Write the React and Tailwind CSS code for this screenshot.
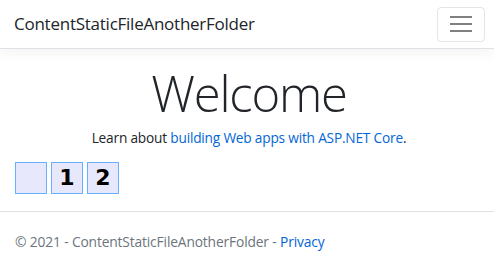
import React from 'react';

const Box = ({ label }) => (
  <div className="w-[32px] h-[32px] border border-[#66b0ff] bg-[#e8e8fc] flex items-center justify-center text-[22px] font-black text-black font-['DejaVu_Sans',sans-serif] leading-none">
    {label}
  </div>
);

export default function App() {
  return (
    <div className="min-h-[267px] bg-white text-[#212529] font-['Open_Sans',sans-serif] text-[14px]">
      <header className="h-[49px] border-b border-[#dee2e6] shadow-[0_4px_12px_rgba(0,0,0,0.05)] flex items-center justify-between pl-[14px] pr-[9px]">
        <span className="text-[17px] tracking-[-0.25px]">ContentStaticFileAnotherFolder</span>
        <button className="w-[48px] h-[35px] border border-[rgba(0,0,0,0.1)] rounded-[4px] flex flex-col items-center justify-center gap-[5px]">
          <span className="block w-[22px] h-[2px] bg-[#808080]" />
          <span className="block w-[22px] h-[2px] bg-[#808080]" />
          <span className="block w-[22px] h-[2px] bg-[#808080]" />
        </button>
      </header>

      <main className="px-[15px] pt-[15px]">
        <div className="text-center">
          <h1 className="text-[49px] font-light leading-[1.2] tracking-[-1.2px] pl-[4px]">Welcome</h1>
          <p className="mt-[5px] text-[13.7px] tracking-[-0.2px] pl-[4px]">
            Learn about <a className="text-[#0366d6]">building Web apps with ASP.NET Core</a>.
          </p>
        </div>
        <div className="flex gap-[4px] mt-[14px] mb-[17px]">
          <Box label="" />
          <Box label="1" />
          <Box label="2" />
        </div>
      </main>

      <footer className="border-t border-[#dee2e6] h-[60px] leading-[60px] px-[15px] text-[#6c757d] text-[13.8px] tracking-[-0.15px]">
        © 2021 - ContentStaticFileAnotherFolder - <a className="text-[#0366d6]">Privacy</a>
      </footer>
    </div>
  );
}
